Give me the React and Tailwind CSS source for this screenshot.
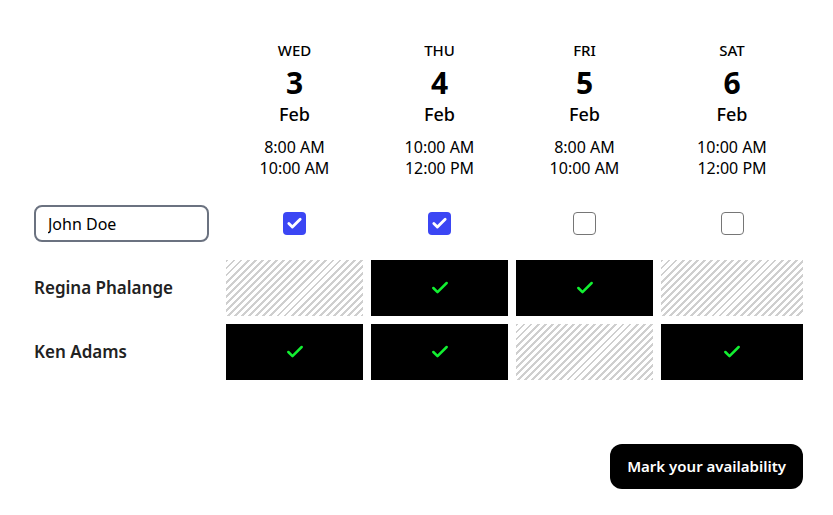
import { Check } from 'lucide-react'

const days = [
  { dow: 'WED', day: 3, month: 'Feb', from: '8:00 AM', to: '10:00 AM', mine: true },
  { dow: 'THU', day: 4, month: 'Feb', from: '10:00 AM', to: '12:00 PM', mine: true },
  { dow: 'FRI', day: 5, month: 'Feb', from: '8:00 AM', to: '10:00 AM', mine: false },
  { dow: 'SAT', day: 6, month: 'Feb', from: '10:00 AM', to: '12:00 PM', mine: false },
]

const people = [
  { name: 'Regina Phalange', slots: [false, true, true, false] },
  { name: 'Ken Adams', slots: [true, true, false, true] },
]

const cols = 'grid grid-cols-[184px_137px_137px_137px_142px] gap-x-2'

const Slot = ({ ok }) =>
  ok ? (
    <div className="h-14 bg-black flex items-center justify-center">
      <Check size={20} strokeWidth={3} className="text-[#12f031]" />
    </div>
  ) : (
    <div className="h-14 bg-[repeating-linear-gradient(135deg,#cfcfcf_0px,#cfcfcf_2px,#ffffff_2px,#ffffff_5px)]" />
  )

const Box = ({ checked }) => (
  <div
    className={`w-[23px] h-[23px] rounded-[4px] flex items-center justify-center ${
      checked ? 'bg-[#3b46f4]' : 'bg-white border border-[#767676]'
    }`}
  >
    {checked && <Check size={17} strokeWidth={4} className="text-white" />}
  </div>
)

export default function App() {
  return (
    <div className="min-h-screen bg-white text-black pl-[34px] pt-[40px] font-['Noto_Sans',sans-serif]">
      {/* Header */}
      <div className={cols}>
        <div />
        {days.map((d) => (
          <div key={d.dow} className="flex flex-col items-center">
            <span className="text-[15px] leading-5 font-medium">{d.dow}</span>
            <span className="text-[30px] leading-9 font-bold mt-[5px]">{d.day}</span>
            <span className="text-[18px] leading-[26px] font-medium">{d.month}</span>
            <span className="text-[16px] leading-[21px] mt-[10px]">{d.from}</span>
            <span className="text-[16px] leading-[21px]">{d.to}</span>
          </div>
        ))}
      </div>

      {/* Your row */}
      <div className={`${cols} mt-[26px] items-center`}>
        <input
          defaultValue="John Doe"
          className="w-[175px] h-[37px] border-2 border-[#6b7280] rounded-lg px-3 text-[16px] outline-none"
        />
        {days.map((d) => (
          <div key={d.dow} className="flex justify-center">
            <Box checked={d.mine} />
          </div>
        ))}
      </div>

      {/* Others */}
      <div className="mt-[18px] flex flex-col gap-2">
        {people.map((p) => (
          <div key={p.name} className={`${cols} items-center`}>
            <span className="text-[17px] font-semibold text-[#222]">{p.name}</span>
            {p.slots.map((ok, i) => (
              <Slot key={i} ok={ok} />
            ))}
          </div>
        ))}
      </div>

      <div className="flex justify-end pr-[30px] mt-16">
        <button className="h-[45px] px-[17px] rounded-xl bg-black text-white text-[15px] font-semibold">
          Mark your availability
        </button>
      </div>
    </div>
  )
}
